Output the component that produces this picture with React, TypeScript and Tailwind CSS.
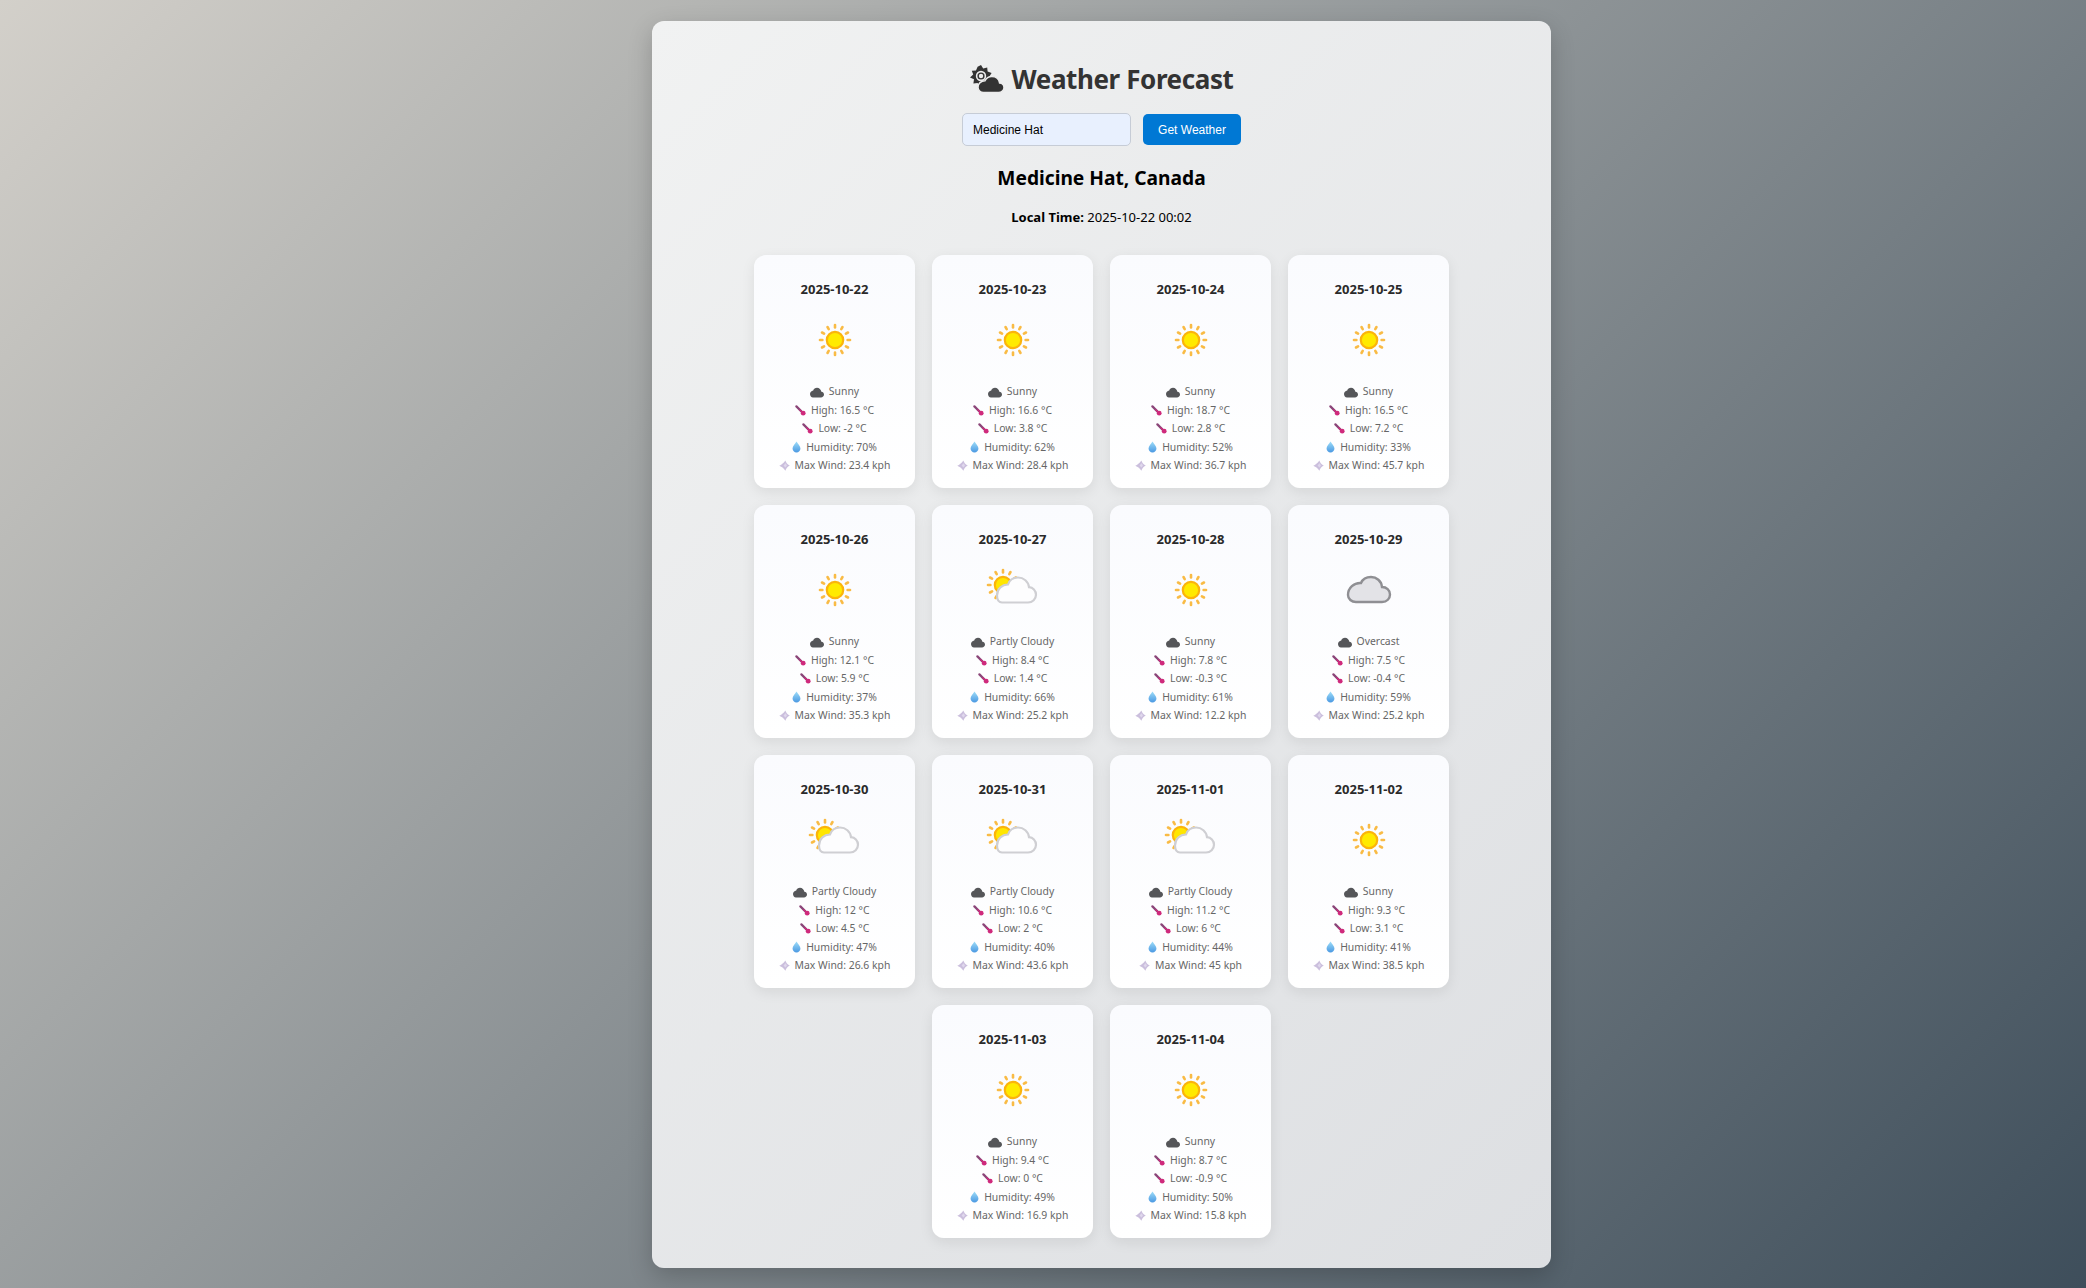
import React from 'react';

type Day = { date: string; kind: 'sun' | 'partly' | 'over'; cond: string; high: string; low: string; hum: string; wind: string };

const DAYS: Day[] = [
  { date: '2025-10-22', kind: 'sun', cond: 'Sunny', high: '16.5', low: '-2', hum: '70', wind: '23.4' },
  { date: '2025-10-23', kind: 'sun', cond: 'Sunny', high: '16.6', low: '3.8', hum: '62', wind: '28.4' },
  { date: '2025-10-24', kind: 'sun', cond: 'Sunny', high: '18.7', low: '2.8', hum: '52', wind: '36.7' },
  { date: '2025-10-25', kind: 'sun', cond: 'Sunny', high: '16.5', low: '7.2', hum: '33', wind: '45.7' },
  { date: '2025-10-26', kind: 'sun', cond: 'Sunny', high: '12.1', low: '5.9', hum: '37', wind: '35.3' },
  { date: '2025-10-27', kind: 'partly', cond: 'Partly Cloudy', high: '8.4', low: '1.4', hum: '66', wind: '25.2' },
  { date: '2025-10-28', kind: 'sun', cond: 'Sunny', high: '7.8', low: '-0.3', hum: '61', wind: '12.2' },
  { date: '2025-10-29', kind: 'over', cond: 'Overcast', high: '7.5', low: '-0.4', hum: '59', wind: '25.2' },
  { date: '2025-10-30', kind: 'partly', cond: 'Partly Cloudy', high: '12', low: '4.5', hum: '47', wind: '26.6' },
  { date: '2025-10-31', kind: 'partly', cond: 'Partly Cloudy', high: '10.6', low: '2', hum: '40', wind: '43.6' },
  { date: '2025-11-01', kind: 'partly', cond: 'Partly Cloudy', high: '11.2', low: '6', hum: '44', wind: '45' },
  { date: '2025-11-02', kind: 'sun', cond: 'Sunny', high: '9.3', low: '3.1', hum: '41', wind: '38.5' },
  { date: '2025-11-03', kind: 'sun', cond: 'Sunny', high: '9.4', low: '0', hum: '49', wind: '16.9' },
  { date: '2025-11-04', kind: 'sun', cond: 'Sunny', high: '8.7', low: '-0.9', hum: '50', wind: '15.8' },
];

const Rays = ({ cx, cy, angles }: { cx: number; cy: number; angles: number[] }) => (
  <g stroke="#f9bb45" strokeWidth="2.6" strokeLinecap="round">
    {angles.map((a) => {
      const r = (a * Math.PI) / 180;
      return (
        <line
          key={a}
          x1={cx + Math.cos(r) * 12.6}
          y1={cy + Math.sin(r) * 12.6}
          x2={cx + Math.cos(r) * 15}
          y2={cy + Math.sin(r) * 15}
        />
      );
    })}
  </g>
);

const WeatherIcon = ({ kind }: { kind: Day['kind'] }) => {
  if (kind === 'over') {
    return (
      <svg width="64" height="64" viewBox="0 0 64 64">
        <path
          d="M19 44H45C50 44 53 40.5 53 36.5C53 32 49.5 29 45 29C44.5 23 39.5 19 34 19C29 19 25.5 21.5 24 25C17 24.5 11 30 11 37C11 41 14.5 44 19 44Z"
          fill="#e3e3e7"
          stroke="#8f8f93"
          strokeWidth="2.4"
        />
      </svg>
    );
  }
  if (kind === 'partly') {
    return (
      <svg width="64" height="64" viewBox="0 0 64 64">
        <Rays cx={22} cy={27} angles={[150, 180, 210, 240, 270, 300, 330, 120]} />
        <circle cx="22" cy="27" r="8.2" fill="#ffe600" stroke="#fbb40c" strokeWidth="2.2" />
        <path
          d="M21 44.5H47C51.5 44.5 55 41 55 36.8C55 32.5 51.8 29.5 48 29.2C47.5 23.5 42.5 19.5 37 19.5C32 19.5 28.5 22 27 26.5C21 26.5 16 31 16 37.5C16 41.5 18 44.5 21 44.5Z"
          fill="#fdfdfe"
          stroke="#cfcfd3"
          strokeWidth="2.2"
        />
      </svg>
    );
  }
  return (
    <svg width="64" height="64" viewBox="0 0 64 64">
      <Rays cx={32} cy={32} angles={[0, 30, 60, 90, 120, 150, 180, 210, 240, 270, 300, 330]} />
      <circle cx="32" cy="32" r="8.2" fill="#ffea00" stroke="#fbb40c" strokeWidth="2.2" />
    </svg>
  );
};

const CloudGlyph = () => (
  <svg width="14" height="11" viewBox="0 0 14 11" className="shrink-0">
    <path d="M3 10.5H11C12.6 10.5 14 9.3 14 7.6C14 6 12.8 4.9 11.4 4.8C11 2.6 9.2 0.8 7 0.8C5.2 0.8 3.8 1.9 3.2 3.5C1.4 3.7 0 5.2 0 7.1C0 9 1.3 10.5 3 10.5Z" fill="#555659" />
  </svg>
);

const ThermoGlyph = () => (
  <svg width="11" height="11" viewBox="0 0 11 11" className="shrink-0">
    <line x1="1.4" y1="1.4" x2="7.6" y2="7.6" stroke="#8a4578" strokeWidth="2.2" strokeLinecap="round" />
    <line x1="4.5" y1="4.5" x2="8" y2="8" stroke="#cf2a7c" strokeWidth="1.3" />
    <circle cx="8.2" cy="8.2" r="2.4" fill="#cf2a7c" />
  </svg>
);

const DropGlyph = () => (
  <svg width="9" height="12" viewBox="0 0 10 13" className="shrink-0">
    <defs>
      <linearGradient id="drop" x1="0" y1="0" x2="0" y2="1">
        <stop offset="0" stopColor="#9cdcf8" />
        <stop offset="1" stopColor="#4a98e2" />
      </linearGradient>
    </defs>
    <path d="M5 0.5C6.5 3 9.4 5.4 9.4 8.3C9.4 10.7 7.4 12.7 5 12.7C2.6 12.7 0.6 10.7 0.6 8.3C0.6 5.4 3.5 3 5 0.5Z" fill="url(#drop)" />
  </svg>
);

const WindGlyph = () => (
  <svg width="11" height="11" viewBox="0 0 11 11" className="shrink-0">
    <path d="M0.3 5.8C2.5 4.8 4.2 3.2 6.4 0.4C6.9 2.2 8 4.2 10.8 5.4C8.4 6.6 7 8.6 6.4 10.8C5 8.6 3 6.8 0.3 5.8Z" fill="#cbbfdd" />
    <path d="M4.6 5.4L6.5 3.2L8 5.4L6.4 7.4Z" fill="#dfd7ec" />
  </svg>
);

const TitleIcon = () => (
  <svg width="34" height="28" viewBox="0 0 34 28" className="shrink-0">
    <path d="M11 0L13.2 3.4L17.2 2.4L17.6 6.5L21.6 8L19.4 11.4L21.4 15L17.4 16L16.8 20L13 18.8L9.8 21.4L7.6 18L3.4 18.4L4 14.2L0 12.4L3.2 9.6L1.8 5.8L6 5.4L7.6 1.8Z" fill="#333" />
    <circle cx="11" cy="11" r="5.2" fill="#ececec" />
    <circle cx="11" cy="11" r="3.6" fill="#333" />
    <circle cx="11" cy="11" r="2.2" fill="#ececec" />
    <path
      d="M13.5 27.5H28.5C31.5 27.5 34 25.4 34 22.7C34 20 32 18.2 29.6 18C29 14 25.7 11.4 21.8 11.4C18.6 11.4 16.2 13 15 15.7C11 15.7 8 18.6 8 22.3C8 25.2 10.4 27.5 13.5 27.5Z"
      fill="#333"
      stroke="#ececec"
      strokeWidth="1.5"
    />
  </svg>
);

const Row = ({ icon, children }: { icon: React.ReactNode; children: React.ReactNode }) => (
  <div className="flex items-center justify-center gap-[5px] h-[18.4px]">
    {icon}
    <span>{children}</span>
  </div>
);

const DayCard = ({ day }: { day: Day }) => (
  <div className="w-[161px] h-[233px] rounded-[12px] bg-gradient-to-b from-[#fafbfe] to-white shadow-[0_4px_14px_rgba(0,0,0,0.08)] flex flex-col items-center pt-[25px]">
    <h3 className="text-[13px] leading-[18px] font-bold text-[#2a2a2a]">{day.date}</h3>
    <div className="mt-[10px] h-[64px]">
      <WeatherIcon kind={day.kind} />
    </div>
    <div className="mt-[11px] text-[10.4px] text-[#666] w-full">
      <Row icon={<CloudGlyph />}>{day.cond}</Row>
      <Row icon={<ThermoGlyph />}>High: {day.high} °C</Row>
      <Row icon={<ThermoGlyph />}>Low: {day.low} °C</Row>
      <Row icon={<DropGlyph />}>Humidity: {day.hum}%</Row>
      <Row icon={<WindGlyph />}>Max Wind: {day.wind} kph</Row>
    </div>
  </div>
);

export default function App() {
  return (
    <div className="min-h-[1288px] bg-[linear-gradient(135deg,#d3d0ca,#3e4e5b)] pt-[21px] pb-[20px] font-['Noto_Sans',sans-serif]">
      <div className="ml-[652px] w-[899px] h-[1247px] rounded-[12px] bg-[linear-gradient(135deg,#f1f2f2,#dddfe2)] shadow-[0_8px_24px_rgba(0,0,0,0.2)] flex flex-col items-center pt-[36px]">
        <div className="flex items-center gap-[8px] h-[44px]">
          <TitleIcon />
          <h1 className="text-[26px] leading-[44px] font-bold tracking-[-0.4px] text-[#333]">Weather Forecast</h1>
        </div>
        <div className="mt-[12px] flex items-center gap-[12px] font-['Liberation_Sans',sans-serif] text-[12px]">
          <input
            readOnly
            value="Medicine Hat"
            className="w-[169px] h-[33px] px-[10px] rounded-[5px] border border-[#c6ccd6] bg-[#e8f0fe] text-[12px] text-black outline-none"
          />
          <button className="w-[98px] h-[31px] rounded-[5px] bg-[#0078d4] text-white">Get Weather</button>
        </div>
        <h2 className="mt-[18px] text-[19.2px] leading-[28px] font-bold text-black">Medicine Hat, Canada</h2>
        <p className="mt-[15px] mb-[1px] text-[13px] leading-[20px] text-black">
          <b>Local Time:</b> 2025-10-22 00:02
        </p>
        <div className="mt-[27px] w-[695px] flex flex-wrap justify-center gap-[17px]">
          {DAYS.map((d) => (
            <DayCard key={d.date} day={d} />
          ))}
        </div>
      </div>
    </div>
  );
}
